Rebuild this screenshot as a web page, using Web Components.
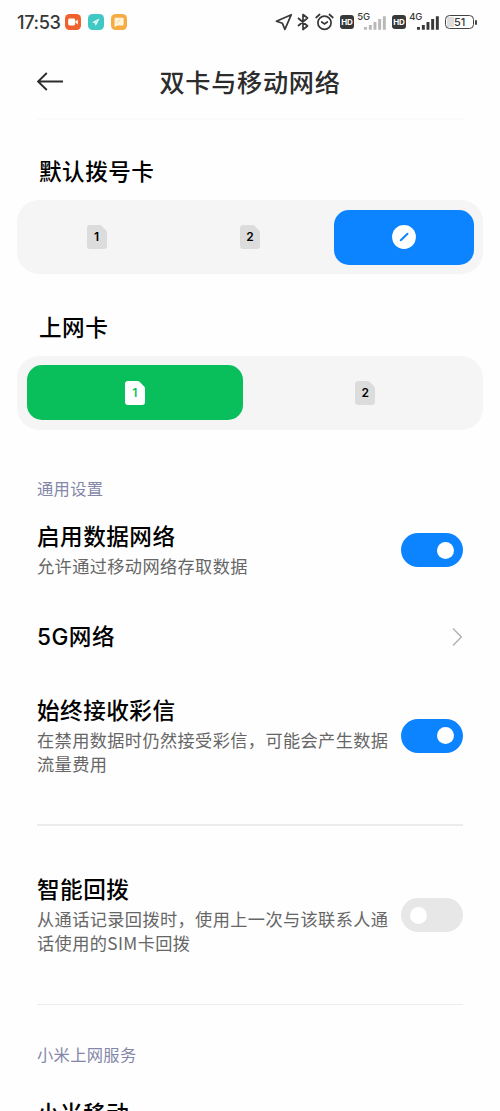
<!DOCTYPE html>
<html lang="zh-CN">
<head>
<meta charset="utf-8">
<title>双卡与移动网络</title>
<style>
html,body{margin:0;height:1111px;overflow:hidden;background:#fefefe}
body{font-family:"Noto Sans CJK SC",sans-serif;color:#000}
</style>
</head>
<body>
<settings-page></settings-page>
<script>
const define = (name, html, setup) => {
  const tpl = document.createElement('template');
  tpl.innerHTML = html;
  customElements.define(name, class extends HTMLElement {
    constructor() {
      super();
      this.attachShadow({mode: 'open'}).append(tpl.content.cloneNode(true));
    }
    connectedCallback() { if (setup) setup(this, this.shadowRoot); }
  });
};

define('status-bar', `
<style>
:host{display:flex;align-items:center;height:44px;box-sizing:border-box;padding:0 23.500px 0 17px;color:#383838;font-family:Inter,"Noto Sans CJK SC",sans-serif}
.time{font:500 18.2px/24px Inter,sans-serif;letter-spacing:-.4px;width:47.500px;white-space:nowrap}
svg{display:block;flex:none}
.app{margin-right:7px}
.grow{flex:1}
.net{font:500 9.5px/10px Inter,sans-serif;align-self:flex-start;margin-top:12px;white-space:nowrap;letter-spacing:-.1px}
.hd{display:grid;place-items:center;flex:none;width:14.5px;height:14px;border-radius:3px;background:#383838;color:#fff;font:700 8px/14px Inter,sans-serif;letter-spacing:-.2px}
.bat{display:grid;place-items:center;flex:none;box-sizing:border-box;width:29px;height:14.5px;border:1.3px solid #444;border-radius:4.5px;font:500 11px/12px Inter,sans-serif;background:linear-gradient(90deg,#ddd 0 7px,transparent 7px) 1px 1px/24px 10px no-repeat}
.tip{width:1.5px;height:5px;background:#444;margin-left:.8px;border-radius:1px}
</style>
<span class="time">17:53</span>
<svg class="app" width="16" height="16" viewBox="0 0 16 16"><rect width="16" height="16" rx="4.5" fill="#f0622d"/><rect x="3.2" y="4.5" width="7" height="7" rx="1.4" fill="#fff"/><path d="M10 8l2.8-2.6v5.2z" fill="#fff"/></svg>
<svg class="app" width="16" height="16" viewBox="0 0 16 16"><rect width="16" height="16" rx="4.5" fill="#3fc8c4"/><path d="M12 4L3.600 8.300l3 1 1.100 3.200zM6.600 9.300L9 7" fill="#fff" stroke="#3fc8c4" stroke-width=".5"/></svg>
<svg class="app" width="16" height="16" viewBox="0 0 16 16"><rect width="16" height="16" rx="4.5" fill="#f7ac43"/><path d="M4.500 3.800h7.200q.9 0 .9.9v5.800q0 .9-.9.9H6l-2.400 1.800V4.700q0-.9.9-.9z" fill="#fff4de"/><path d="M5.500 9.200l3.600-3.600" stroke="#f7ac43" stroke-width=".6"/></svg>
<span class="grow"></span>
<svg width="18" height="18" viewBox="0 0 18 18" style="margin-right:4.500px"><path d="M16.300 1.700L1.400 8.200l6 2.100 2.500 6z" fill="none" stroke="#383838" stroke-width="1.700" stroke-linejoin="round"/></svg>
<svg width="12" height="18" viewBox="0 0 12 18" style="margin-right:6px"><path d="M1 5l9.500 8L6 16.500v-15L10.500 5 1 13" fill="none" stroke="#383838" stroke-width="1.700" stroke-linejoin="round"/></svg>
<svg width="19" height="18" viewBox="0 0 19 18" style="margin-right:5.500px"><g fill="none" stroke="#383838" stroke-width="1.700" stroke-linecap="round"><circle cx="9.500" cy="9.800" r="6.600"/><path d="M1.200 4.500L4.600 1.500M17.800 4.500L14.400 1.500M6.700 9l2.800 2 2.800-2"/></g></svg>
<span class="hd">HD</span>
<span class="net" style="margin-left:3px;width:7px">5G</span>
<svg width="22" height="15" viewBox="0 0 22.500 15"><path fill="#b8b8b8" d="M0 12.200h3V15H0zM5 10h3v5H5zM9.700 7h3v8h-3zM14.500 4h3v11h-3zM19.300 1h3v14h-3z"/></svg>
<span class="hd" style="margin-left:5.500px">HD</span>
<span class="net" style="margin-left:3px;width:7.500px">4G</span>
<svg width="22" height="15" viewBox="0 0 22.500 15"><path fill="#383838" d="M0 12.200h3V15H0zM5 10h3v5H5zM9.700 7h3v8h-3zM14.500 4h3v11h-3zM19.300 1h3v14h-3z"/></svg>
<span class="bat" style="margin-left:6.500px">51</span><span class="tip"></span>
`);

define('page-header', `
<style>
:host{display:grid;grid-template-columns:37px 1fr 37px;align-items:center;height:74px;color:#2c2c2c;box-sizing:border-box}
.bar{grid-column:2;display:grid;grid-template-columns:28px 1fr 28px;align-items:center}
h1{margin:0;text-align:center;font-size:25.2px;line-height:36px;font-weight:500;letter-spacing:.7px;white-space:nowrap}
svg{display:block}
</style>
<div class="bar"><svg width="27" height="20" viewBox="0 0 27 20"><path d="M26 10.500H1.200M9.800 2L1 10.500l8.800 8.500" fill="none" stroke="#2c2c2c" stroke-width="1.900"/></svg><h1><slot></slot></h1></div>
`);

define('group-title', `
<style>:host{display:block;padding-left:39px;font-size:22.6px;line-height:30px;font-weight:500;letter-spacing:.5px}</style><slot></slot>`);

define('group-label', `
<style>:host{display:block;padding-left:37px;font-size:16.3px;line-height:24px;letter-spacing:.3px;color:#8487a8}</style><slot></slot>`);

define('thin-divider', `
<style>:host{display:block;height:1.500px;margin:0 37px;background:var(--line,#ececec)}</style>`);

define('segment-group', `
<style>:host{display:grid;grid-auto-flow:column;grid-auto-columns:1fr;gap:13.500px;height:74px;box-sizing:border-box;margin:0 17px;padding:9.500px;border-radius:22px;background:#f5f5f5}</style><slot></slot>`);

define('segment-item', `
<style>
:host{display:grid;place-items:center;border-radius:15px}
:host([tone=blue]){background:#0d84ff}
:host([tone=green]){background:#09bf5b;--card:#fff;--ink:#09bf5b}
</style><slot></slot>`);

define('sim-card', `
<style>
:host{display:grid;place-items:center;width:20px;height:24px;color:var(--ink,#000);font:600 12px/24px Inter,sans-serif}
svg,span{grid-area:1/1}
</style>
<svg width="20" height="24" viewBox="0 0 20 24"><path fill="var(--card,#dcdcdc)" d="M3 0H12.500q1.200 0 2 .8l4.700 4.700q.8.800.8 2v13.500q0 3-3 3H3q-3 0-3-3V3Q0 0 3 0z"/></svg>
<span><slot></slot></span>`);

define('no-default', `
<style>:host{display:block;width:24px;height:24px}svg{display:block}</style>
<svg width="24" height="24" viewBox="0 0 24 24"><circle cx="12" cy="12" r="11.900" fill="#fff"/><path d="M8.800 15.200l6.700-6.400" stroke="#0d84ff" stroke-width="2" stroke-linecap="round"/></svg>`);

define('toggle-switch', `
<style>
:host{display:flex;align-items:center;box-sizing:border-box;width:62px;height:34px;padding:0 9px;border-radius:17px;background:#e7e7e7}
:host([on]){background:#0d84ff;justify-content:flex-end}
i{width:17px;height:17px;border-radius:50%;background:#fff}
</style><i></i>`);

define('setting-row', `
<style>
:host{display:flex;align-items:center;padding:0 37px}
.text{flex:1;min-width:0}
.title{font-family:Inter,"Noto Sans CJK SC",sans-serif;font-size:22.600px;line-height:30px;font-weight:500;letter-spacing:.5px;white-space:nowrap}
.latin{font-weight:600}
.desc{margin-top:2px;width:360px;font-size:17.200px;line-height:23.700px;letter-spacing:.38px;color:#666;white-space:pre}
.desc:empty{display:none}
</style>
<div class="text"><div class="title"></div><div class="desc"></div></div><slot></slot>`,
(el, root) => {
  root.querySelector('.title').textContent = el.getAttribute('heading');
  root.querySelector('.desc').textContent = (el.getAttribute('desc') || '').replace('|', '\n');
});

define('row-chevron', `
<style>:host{display:block}svg{display:block}</style>
<svg width="12" height="20" viewBox="0 0 12 20"><path d="M2 1.500L10.300 10 2 18.500" fill="none" stroke="#b4b4b4" stroke-width="1.500"/></svg>`);

define('settings-page', `
<style>
:host{display:block;width:500px;height:1111px;overflow:hidden}
</style>
<status-bar></status-bar>
<page-header>双卡与移动网络</page-header>
<thin-divider style="--line:#fafafa"></thin-divider>
<group-title style="margin-top:36.500px">默认拨号卡</group-title>
<segment-group style="margin-top:14.300px">
  <segment-item><sim-card>1</sim-card></segment-item>
  <segment-item><sim-card>2</sim-card></segment-item>
  <segment-item tone="blue"><no-default></no-default></segment-item>
</segment-group>
<group-title style="margin-top:37.700px">上网卡</group-title>
<segment-group style="margin-top:14px">
  <segment-item tone="green"><sim-card>1</sim-card></segment-item>
  <segment-item><sim-card>2</sim-card></segment-item>
</segment-group>
<group-label style="margin-top:46px">通用设置</group-label>
<setting-row style="margin-top:22.500px" heading="启用数据网络" desc="允许通过移动网络存取数据"><toggle-switch on></toggle-switch></setting-row>
<setting-row style="margin-top:43.800px" heading="5G网络"><row-chevron></row-chevron></setting-row>
<setting-row style="margin-top:44.300px" heading="始终接收彩信" desc="在禁用数据时仍然接受彩信，可能会产生数据|流量费用"><toggle-switch on></toggle-switch></setting-row>
<thin-divider style="margin-top:48.700px"></thin-divider>
<setting-row style="margin-top:49.500px" heading="智能回拨" desc="从通话记录回拨时，使用上一次与该联系人通|话使用的SIM卡回拨"><toggle-switch></toggle-switch></setting-row>
<thin-divider style="margin-top:49px"></thin-divider>
<group-label style="margin-top:37px">小米上网服务</group-label>
<setting-row style="margin-top:32.500px" heading="小米移动"></setting-row>
`);
</script>
</body>
</html>
